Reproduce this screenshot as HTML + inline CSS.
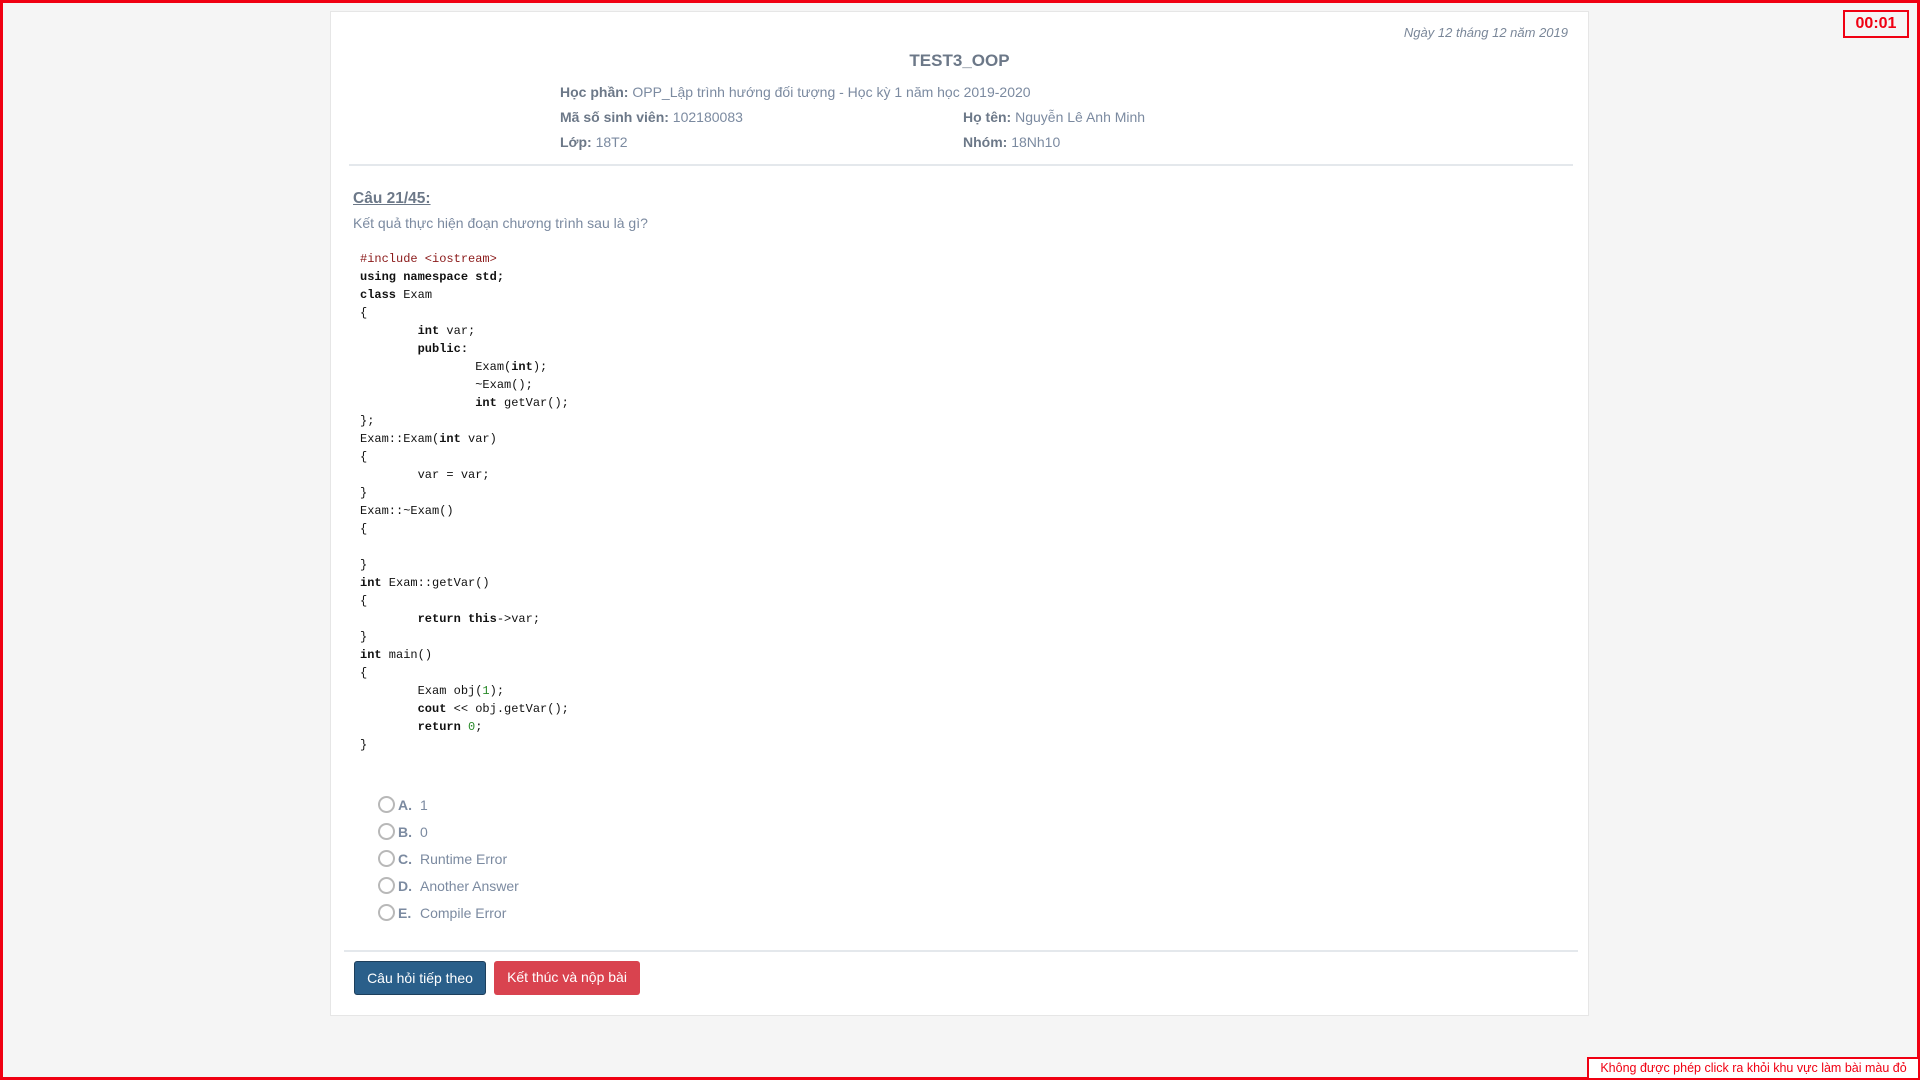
<!DOCTYPE html>
<html><head><meta charset="utf-8"><style>
*{box-sizing:border-box;margin:0;padding:0}
html,body{width:1920px;height:1080px;overflow:hidden}
body{background:#f5f5f5;font-family:"Liberation Sans",sans-serif;position:relative}
.frame{position:absolute;left:0;top:0;width:1920px;height:1080px;border:3px solid #f00012}
.card{position:absolute;left:330px;top:11px;width:1259px;height:1005px;background:#fff;border:1px solid #e6e6e6}
.abs{position:absolute;white-space:nowrap}
.date{right:20px;top:13px;font-style:italic;font-size:13px;color:#7a8799}
.title{left:0;right:0;text-align:center;top:39px;font-weight:bold;font-size:17px;color:#6c7888}
.info{font-size:14px;color:#7b8aa0}
.info b{color:#6c7888}
.hr{position:absolute;height:2px;background:#e4e8ec}
.q{left:22px;top:178px;font-weight:bold;font-size:15.5px;color:#6c7888;text-decoration:underline}
.qt{left:22px;top:203px;font-size:14px;color:#7b8aa0}
pre{position:absolute;left:29px;top:238px;font-family:"Liberation Mono",monospace;font-size:12px;line-height:18px;color:#111;tab-size:8}
pre b{font-weight:bold}
.n{color:#2a8a2a}.p{color:#8b1a1a}
.opt{left:47px;font-size:14px;color:#7b8aa0}
.opt .r{display:inline-block;width:17px;height:17px;border:2px solid #b8b8b8;border-radius:50%;vertical-align:-3px;margin-right:3px}
.opt b{display:inline-block;width:22px;color:#7b8aa0}
.btn{position:absolute;top:949px;height:34px;color:#fff;font-size:14px;line-height:32px;text-align:center;border-radius:3px}
</style></head><body>
<div class="card">
<div class="abs date">Ngày 12 tháng 12 năm 2019</div>
<div class="abs title">TEST3_OOP</div>
<div class="abs info" style="left:229px;top:72px"><b>Học phần:</b> OPP_Lập trình hướng đối tượng - Học kỳ 1 năm học 2019-2020</div>
<div class="abs info" style="left:229px;top:97px"><b>Mã số sinh viên:</b> 102180083</div>
<div class="abs info" style="left:632px;top:97px"><b>Họ tên:</b> Nguyễn Lê Anh Minh</div>
<div class="abs info" style="left:229px;top:122px"><b>Lớp:</b> 18T2</div>
<div class="abs info" style="left:632px;top:122px"><b>Nhóm:</b> 18Nh10</div>
<div class="hr" style="left:18px;width:1224px;top:152px"></div>
<div class="abs q">Câu 21/45:</div>
<div class="abs qt">Kết quả thực hiện đoạn chương trình sau là gì?</div>
<pre><span class="p">#include &lt;iostream&gt;</span>
<b>using namespace std;</b>
<b>class</b> Exam
{
	<b>int</b> var;
	<b>public:</b>
		Exam(<b>int</b>);
		~Exam();
		<b>int</b> getVar();
};
Exam::Exam(<b>int</b> var)
{
	var = var;
}
Exam::~Exam()
{

}
<b>int</b> Exam::getVar()
{
	<b>return this</b>-&gt;var;
}
<b>int</b> main()
{
	Exam obj(<span class="n">1</span>);
	<b>cout</b> &lt;&lt; obj.getVar();
	<b>return</b> <span class="n">0</span>;
}</pre>
<div class="abs opt" style="top:784px"><span class="r"></span><b>A.</b>1</div>
<div class="abs opt" style="top:811px"><span class="r"></span><b>B.</b>0</div>
<div class="abs opt" style="top:838px"><span class="r"></span><b>C.</b>Runtime Error</div>
<div class="abs opt" style="top:865px"><span class="r"></span><b>D.</b>Another Answer</div>
<div class="abs opt" style="top:892px"><span class="r"></span><b>E.</b>Compile Error</div>
<div class="hr" style="left:13px;width:1234px;top:938px"></div>
<div class="btn" style="left:23px;width:132px;background:#2a5f8a;border:1px solid #1d3f5c">Câu hỏi tiếp theo</div>
<div class="btn" style="left:163px;width:146px;background:#d9434f">Kết thúc và nộp bài</div>
</div>
<div class="frame"></div>
<div class="abs" style="left:1843px;top:10px;width:66px;height:28px;border:2px solid #f00012;color:#f00012;font-weight:bold;font-size:16px;text-align:center;line-height:24px">00:01</div>
<div class="abs" style="left:1587px;top:1057px;width:333px;height:23px;border:2px solid #f00012;color:#f00012;font-size:12.5px;line-height:19px;text-align:center;background:#fff">Không được phép click ra khỏi khu vực làm bài màu đỏ</div>
</body></html>
